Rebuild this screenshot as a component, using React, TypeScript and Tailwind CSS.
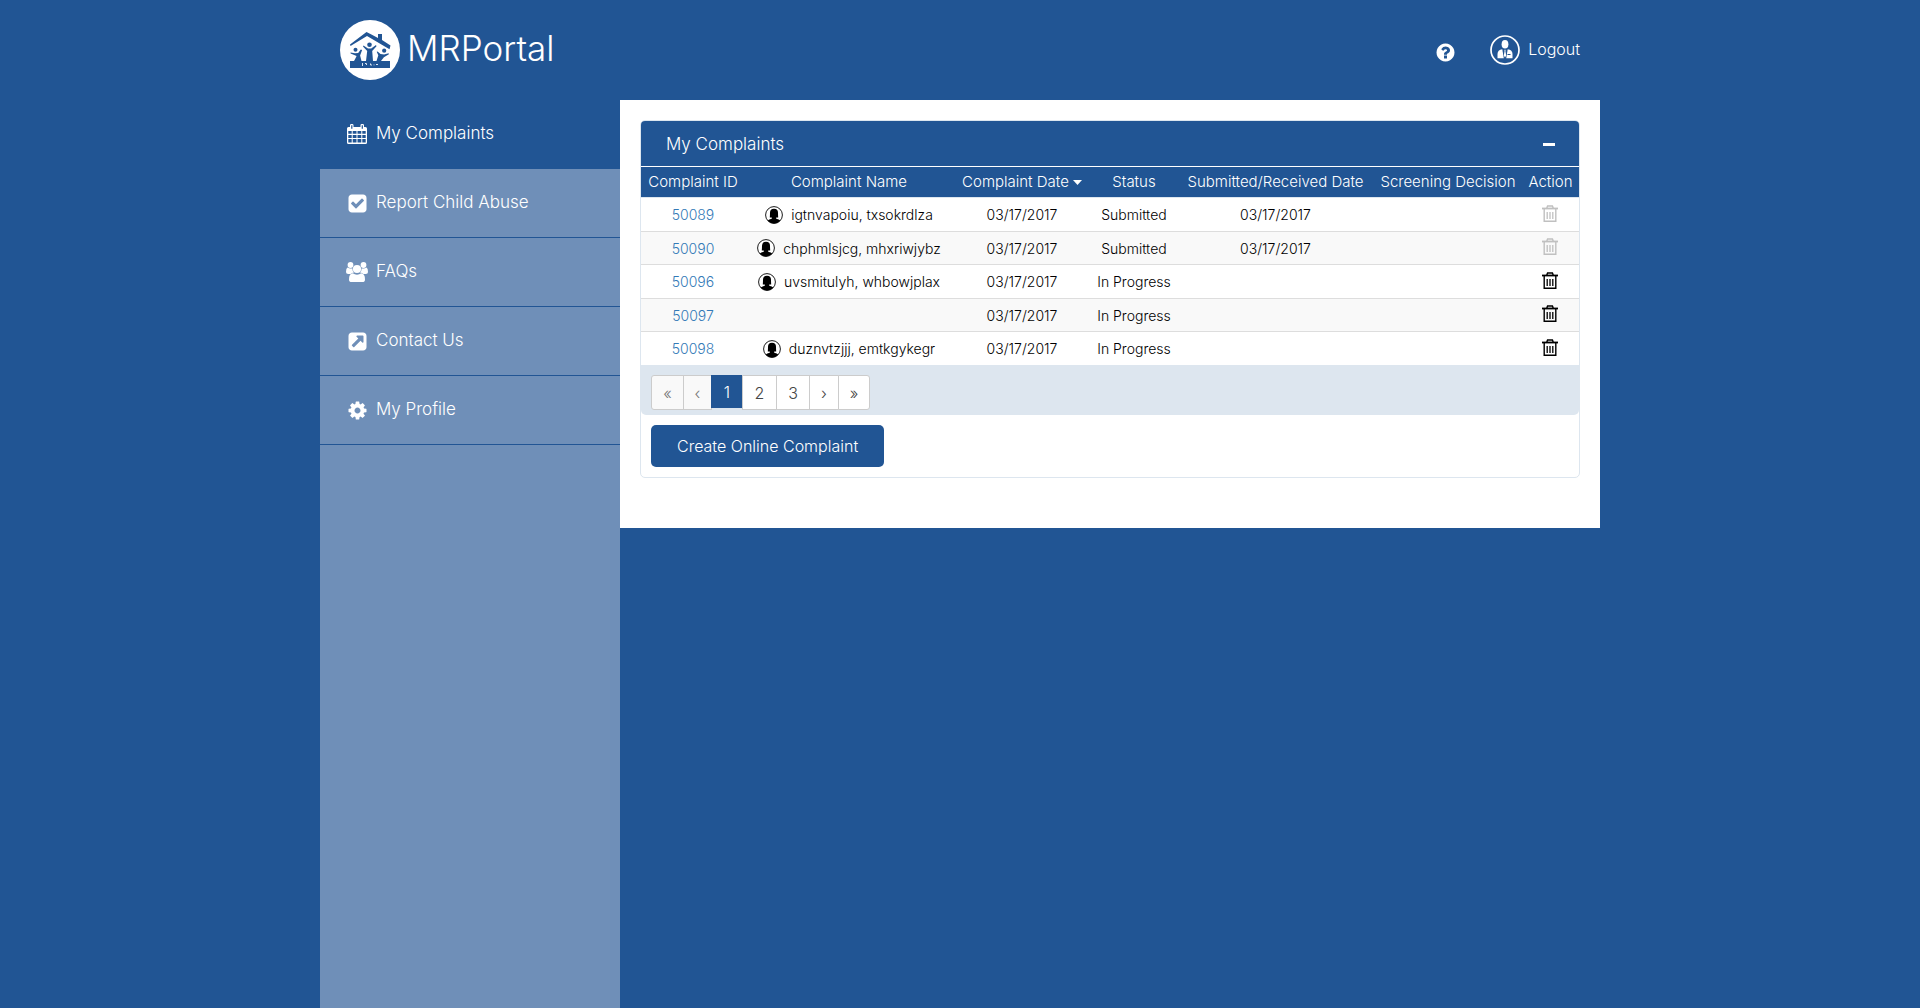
import React from 'react';

const FA = {
  question:
    'M1024 1376v-192q0-14-9-23t-23-9h-192q-14 0-23 9t-9 23v192q0 14 9 23t23 9h192q14 0 23-9t9-23zm256-672q0-88-55.5-163t-138.5-116-170-41q-243 0-371 213-15 24 8 42l132 100q7 6 19 6 16 0 25-12 53-68 86-92 34-24 86-24 48 0 85.5 26t37.5 59q0 38-20 61t-68 45q-63 28-115.5 86.5t-52.5 125.5v36q0 14 9 23t23 9h192q14 0 23-9t9-23q0-19 21.5-49.5t54.5-49.5q32-18 49-28.5t46-35 44.5-48 28-60.5 12.5-81zm384 192q0 209-103 385.5t-279.5 279.5-385.5 103-385.5-103-279.5-279.5-103-385.5 103-385.5 279.5-279.5 385.5-103 385.5 103 279.5 279.5 103 385.5z',
  check:
    'M813 1299l614-614q19-19 19-45t-19-45l-102-102q-19-19-45-19t-45 19l-467 467-211-211q-19-19-45-19t-45 19l-102 102q-19 19-19 45t19 45l358 358q19 19 45 19t45-19zm851-883v960q0 119-84.5 203.5t-203.5 84.5h-960q-119 0-203.5-84.5t-84.5-203.5v-960q0-119 84.5-203.5t203.5-84.5h960q119 0 203.5 84.5t84.5 203.5z',
  link: 'M1408 928v-480q0-26-19-45t-45-19h-480q-42 0-59 39-17 41 14 70l144 144-534 534q-19 19-19 45t19 45l102 102q19 19 45 19t45-19l534-534 144 144q18 19 45 19 12 0 25-5 39-17 39-59zm256-512v960q0 119-84.5 203.5t-203.5 84.5h-960q-119 0-203.5-84.5t-84.5-203.5v-960q0-119 84.5-203.5t203.5-84.5h960q119 0 203.5 84.5t84.5 203.5z',
  cog: 'M1152 896q0-106-75-181t-181-75-181 75-75 181 75 181 181 75 181-75 75-181zm512-109v222q0 12-8 23t-20 13l-185 28q-19 54-39 91 35 50 107 138 10 12 10 25t-9 23q-27 37-99 108t-94 71q-12 0-26-9l-138-108q-44 23-91 38-16 136-29 186-7 28-36 28h-222q-14 0-24.5-8.5t-11.5-21.5l-28-184q-49-16-90-37l-141 107q-10 9-25 9-14 0-25-11-126-114-165-168-7-10-7-23 0-12 8-23 15-21 51-66.5t54-70.5q-27-50-41-99l-183-27q-13-2-21-12.5t-8-23.5v-222q0-12 8-23t19-13l186-28q14-46 39-92-40-57-107-138-10-12-10-24 0-10 9-23 26-36 98.5-107.5t94.5-71.5q13 0 26 10l138 107q44-23 91-38 16-136 29-186 7-28 36-28h222q14 0 24.5 8.5t11.5 21.5l28 184q49 16 90 37l142-107q9-9 24-9 13 0 25 10 129 119 165 170 7 8 7 22 0 12-8 23-15 21-51 66.5t-54 70.5q26 50 41 98l183 28q13 2 21 12.5t8 23.5z',
};

function Glyph({ d }: { d: string }) {
  return (
    <svg viewBox="0 0 1792 1792" className="size-[21px] fill-current" aria-hidden="true">
      <path d={d} />
    </svg>
  );
}

function CalendarIcon() {
  return (
    <svg viewBox="0 0 22 22" className="size-[22px] fill-current" aria-hidden="true">
      <path
        fillRule="evenodd"
        d="M2.5 4H4V2.3Q4 1 5.3 1h.9Q7.500 1 7.500 2.300V4h7V2.300Q14.500 1 15.800 1h.9Q18 1 18 2.300V4h1.500Q21 4 21 5.500v14Q21 21 19.500 21h-17Q1 21 1 19.500v-14Q1 4 2.500 4zM5.200 2.300v3.400h1.200V2.300zM15.700 2.300v3.400h1.200V2.300zM2.300 8v2.800h3.400V8zM6.700 8v2.800h3.800V8zM11.500 8v2.800h3.800V8zM16.300 8v2.800h3.400V8zM2.300 12v3h3.400v-3zM6.700 12v3h3.800v-3zM11.500 12v3h3.800v-3zM16.300 12v3h3.400v-3zM2.300 16v3.500h3.400V16zM6.700 16v3.500h3.800V16zM11.500 16v3.500h3.800V16zM16.300 16v3.500h3.400V16z"
      />
    </svg>
  );
}

function UsersIcon() {
  return (
    <svg viewBox="0 0 22 22" className="size-[22px] fill-current" aria-hidden="true">
      <circle cx="4.500" cy="4" r="2.900" />
      <circle cx="17.500" cy="4" r="2.900" />
      <path d="M1.500 6.500Q3 7.600 4.600 7.600q1 0 1.700-.4Q6.300 10 8 11.500 5.800 11.600 4.600 13H2.200Q0 13 0 11q0-3.700 1.500-4.500zM20.500 6.500Q19 7.600 17.400 7.600q-1 0-1.700-.4 0 2.800-1.700 4.300 2.200.1 3.400 1.500h2.400q2.200 0 2.200-2 0-3.700-1.500-4.500z" />
      <circle cx="11" cy="8" r="4.100" />
      <path d="M6.800 12.300Q8.800 13.700 11 13.700t4.200-1.400Q19 12.500 19 18.400 19 21 16.300 21H5.700Q3 21 3 18.400q0-5.900 3.800-6.100z" />
    </svg>
  );
}

function Logo() {
  return (
    <svg viewBox="0 0 60 60" className="size-[60px]" aria-hidden="true">
      <circle cx="30" cy="30" r="30" fill="#fff" />
      <g fill="#215594">
        <path d="M10 24.500 26.500 12 30 13.800 38 18v-4h4v6l8.500 5.500-1 3.700L27 16 10.500 26z" />
        <path d="M10 41h40v7H10z" />
        <circle cx="29.500" cy="24.700" r="2.300" />
        <circle cx="15.500" cy="29.700" r="2" />
        <circle cx="44.200" cy="30.700" r="2.100" />
        <path d="M23.500 25.500 28 28.500h3.200l4.800-3.500.5 1.200-4.300 4.800L33 41h-7l1.200-10-4.200-4.500z" />
        <path d="M10.500 32.500 15 33.300l3.200-.3 2.600-3.500 1.300.6-2 5.400L21.500 41H14l1-1.800 1.600-3.200-6-2.400z" />
        <path d="M37.500 31.500 40.500 34l3.600.5 4.500-1.300.3 1-5 3L41 41h-4.500l1.800-5.700-1.600-3.600z" />
      </g>
      <path d="M22.500 43v3M25 43.500h1.500v1.500M30.500 43.500V45h1.500M34 44.500v.8M36 44.500h2" stroke="#dbe6f2" strokeWidth="1" fill="none" />
    </svg>
  );
}

function AccountIcon() {
  return (
    <svg viewBox="0 0 30 30" className="size-[30px]" aria-hidden="true">
      <circle cx="15" cy="15" r="14" fill="none" stroke="#fff" strokeWidth="1.700" />
      <g fill="#fff">
        <ellipse cx="15" cy="9.300" rx="3.400" ry="4.300" />
        <path d="M12.300 14.200Q7.500 15 7.500 19v4.200h6.300z" />
        <path d="M17.700 14.200Q22.500 15 22.500 19v4.200h-6.300z" />
        <path d="m14.300 14.800h1.400l-.3 1.300.8 4.400L15 22.500l-1.200-2 .8-4.400z" />
      </g>
      <path d="M17.500 19.500h3" stroke="#215594" strokeWidth="1" />
    </svg>
  );
}

function PersonIcon() {
  return (
    <svg viewBox="0 0 18 18" className="size-[18px] shrink-0" aria-hidden="true">
      <circle cx="9" cy="9" r="8.400" fill="#fff" stroke="#000" strokeWidth="0.900" />
      <path d="M9 2.800q4 0 4 4 0 2.200.2 4.700h-2v1.300q3 .6 4 1.600Q13 17.400 9 17.400t-6.200-3q1-1 4-1.600v-1.300h-2Q5 9 5 6.800q0-4 4-4z" fill="#000" />
    </svg>
  );
}

function TrashIcon() {
  return (
    <svg viewBox="0 0 16 18" className="h-[18px] w-4" fill="none" stroke="currentColor" aria-hidden="true">
      <path d="M0 3.500h16" strokeWidth="1.800" />
      <path d="M4.800 3 5.600 1h4.800l.8 2" strokeWidth="1.500" />
      <path d="M2.200 4V16.200h11.600V4" strokeWidth="1.400" />
      <path d="M5.200 7v7M8 7v7M10.800 7v7" strokeWidth="1.300" />
    </svg>
  );
}

const nav = [
  { label: 'My Complaints', icon: <CalendarIcon /> },
  { label: 'Report Child Abuse', icon: <Glyph d={FA.check} /> },
  { label: 'FAQs', icon: <UsersIcon /> },
  { label: 'Contact Us', icon: <Glyph d={FA.link} /> },
  { label: 'My Profile', icon: <Glyph d={FA.cog} /> },
];

const rows = [
  { id: '50089', name: 'igtnvapoiu, txsokrdlza', status: 'Submitted', received: '03/17/2017' },
  { id: '50090', name: 'chphmlsjcg, mhxriwjybz', status: 'Submitted', received: '03/17/2017' },
  { id: '50096', name: 'uvsmitulyh, whbowjplax', status: 'In Progress', received: '' },
  { id: '50097', name: '', status: 'In Progress', received: '' },
  { id: '50098', name: 'duznvtzjjj, emtkgykegr', status: 'In Progress', received: '' },
];

const pageClass =
  '-ml-px flex h-[35px] items-center justify-center border border-[#ccc] text-[16px]';
const enabledPage = ' bg-white text-[#444]';
const disabledPage = ' bg-[#f9f9f9] text-[#777]';

export default function App() {
  return (
    <div className="min-h-screen bg-[#215594] font-['Inter',sans-serif] text-[14px] font-light">
      <div className="mx-auto flex min-h-screen max-w-7xl flex-col">
        <header className="flex h-[100px] items-center justify-between px-5 text-white">
          <a href="#home" className="flex items-center gap-[7px]">
            <Logo />
            <span className="pb-1 text-[35px] leading-[56px]">MRPortal</span>
          </a>
          <div className="flex items-center gap-[34px]">
            <a href="#help" aria-label="Help" className="pt-1">
              <Glyph d={FA.question} />
            </a>
            <a href="#logout" className="flex items-center gap-2 text-[16px]">
              <AccountIcon />
              <span className="pb-0.5">Logout</span>
            </a>
          </div>
        </header>

        <div className="flex grow">
          <nav className="w-[300px] shrink-0 bg-[#6f8fb8] text-[17px] text-white">
            {nav.map((item, i) => (
              <a
                key={item.label}
                href="#"
                className={
                  'flex h-[69px] items-center gap-2 border-b border-[#215594] pl-[26px] ' +
                  (i === 0 ? 'bg-[#215594]' : '')
                }
              >
                <span className="flex w-[22px] justify-center">{item.icon}</span>
                <span>{item.label}</span>
              </a>
            ))}
          </nav>

          <main className="grow self-start bg-white px-5 pt-5 pb-[50px]">
            <section className="rounded-[5px] border border-[#dde6ef]">
              <div className="flex h-[46px] items-center justify-between rounded-t-[4px] border-b border-white bg-[#215594] pt-0.5 pr-6 pl-[25px] text-white">
                <h2 className="text-[17px] font-light">My Complaints</h2>
                <button type="button" aria-label="Collapse" className="flex h-5 items-center">
                  <span className="h-[3px] w-3 bg-white" />
                </button>
              </div>

              <table className="w-full table-fixed border-separate border-spacing-0 text-center text-black">
                <colgroup>
                  <col className="w-[104px]" />
                  <col />
                  <col className="w-[138px]" />
                  <col className="w-[86px]" />
                  <col className="w-[197px]" />
                  <col className="w-[148px]" />
                  <col className="w-[57px]" />
                </colgroup>
                <thead>
                  <tr className="h-[31px] whitespace-nowrap bg-[#215594] text-[15px] text-white [&>th]:border-b [&>th]:border-[#dde6ef] [&>th]:font-light">
                    <th>Complaint ID</th>
                    <th>Complaint Name</th>
                    <th>
                      <button type="button" className="inline-flex items-center gap-1">
                        Complaint Date
                        <svg viewBox="0 0 9 5" className="h-[5px] w-[9px] fill-white" aria-hidden="true">
                          <path d="M0 0h9L4.500 5z" />
                        </svg>
                      </button>
                    </th>
                    <th>Status</th>
                    <th>Submitted/Received Date</th>
                    <th>Screening Decision</th>
                    <th>Action</th>
                  </tr>
                </thead>
                <tbody>
                  {rows.map((r) => (
                    <tr
                      key={r.id}
                      className="h-[34px] whitespace-nowrap even:h-[33px] even:bg-[#f9f9f9] last:h-[33px] [&>td]:border-b [&>td]:border-[#ddd] last:[&>td]:border-b-0"
                    >
                      <td>
                        <a href="#" className="text-[#337ab7]">
                          {r.id}
                        </a>
                      </td>
                      <td>
                        {r.name && (
                          <span className="flex items-center justify-center gap-2">
                            <PersonIcon />
                            {r.name}
                          </span>
                        )}
                      </td>
                      <td>03/17/2017</td>
                      <td>{r.status}</td>
                      <td>{r.received}</td>
                      <td />
                      <td className="pr-0.5 pb-0.5">
                        <button
                          type="button"
                          aria-label="Delete"
                          disabled={r.received !== ''}
                          className="mx-auto block disabled:text-[#c0c0c0]"
                        >
                          <TrashIcon />
                        </button>
                      </td>
                    </tr>
                  ))}
                </tbody>
              </table>

              <div className="flex h-[50px] items-start rounded-b-[5px] bg-[#dde6ef] pt-2.5 pl-[11px]">
                <button type="button" disabled className={pageClass + disabledPage + ' w-[33px] rounded-l-[3px]'}>«</button>
                <button type="button" disabled className={pageClass + disabledPage + ' w-[29px]'}>‹</button>
                <button type="button" className="-ml-px h-[33px] w-8 bg-[#215594] text-[16px] text-white">1</button>
                <button type="button" className={pageClass + enabledPage + ' w-[35px]'}>2</button>
                <button type="button" className={pageClass + enabledPage + ' w-[34px]'}>3</button>
                <button type="button" className={pageClass + enabledPage + ' w-[30px]'}>›</button>
                <button type="button" className={pageClass + enabledPage + ' w-8 rounded-r-[3px]'}>»</button>
              </div>

              <div className="px-2.5 py-2.5">
                <button type="button" className="block h-[42px] rounded-[5px] bg-[#215594] px-[26px] text-[16px] text-white">
                  Create Online Complaint
                </button>
              </div>
            </section>
          </main>
        </div>
      </div>
    </div>
  );
}
